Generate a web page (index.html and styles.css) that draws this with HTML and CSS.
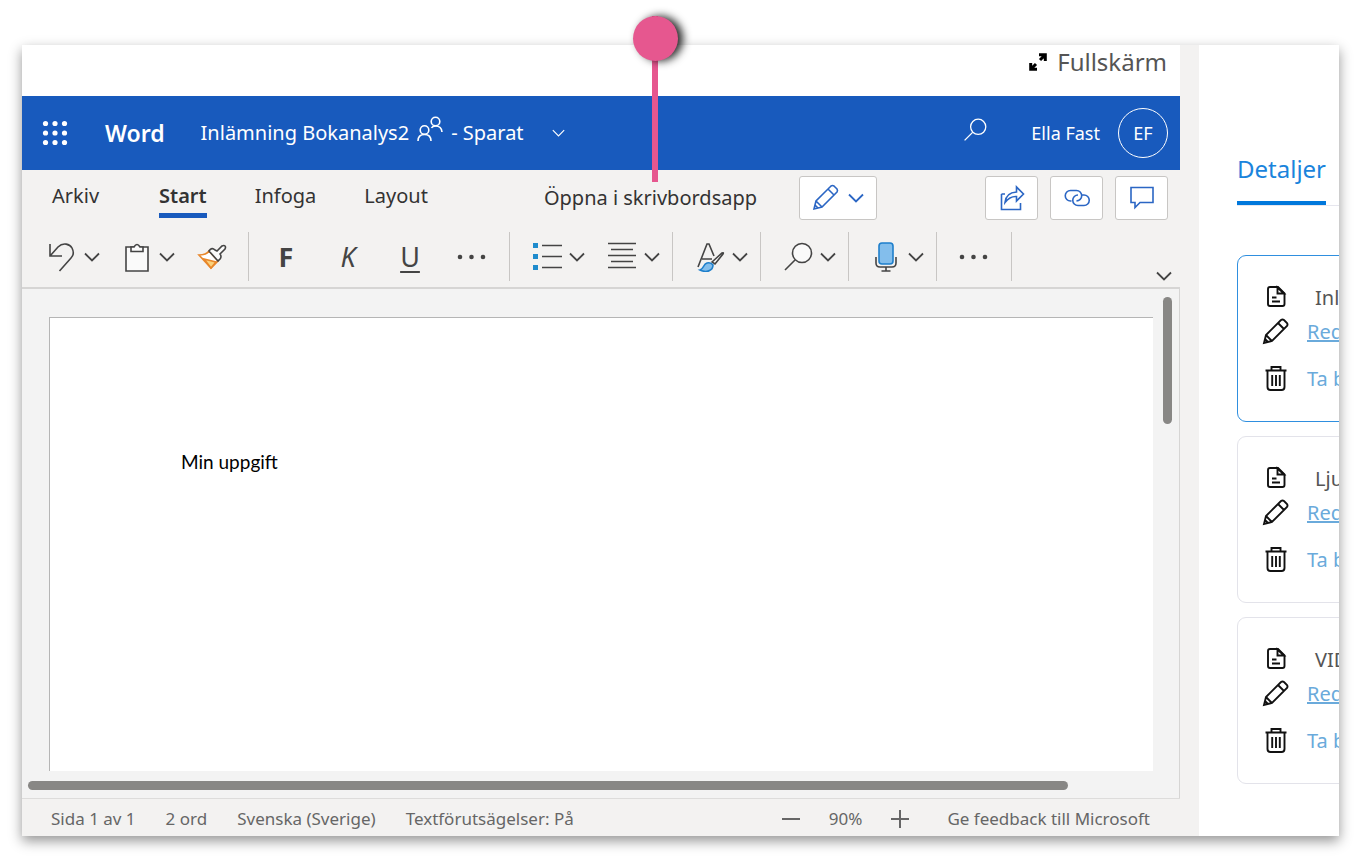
FILE: index.html
```
<!DOCTYPE html>
<html lang="sv">
<head>
  <meta charset="UTF-8">
  <meta name="viewport" content="width=device-width, initial-scale=1.0">
  <title>Inlämning Bokanalys2</title>
  <link rel="stylesheet" href="styles.css">
</head>
<body>

  <!-- Återkommande ikoner -->
  <svg class="symbols" aria-hidden="true">
    <symbol id="chevron" viewBox="0 0 16 10"><path d="M1 1.500l7 7 7-7"/></symbol>
    <symbol id="dots" viewBox="0 0 30 6"><circle cx="3" cy="3" r="2.300"/><circle cx="14.500" cy="3" r="2.300"/><circle cx="26" cy="3" r="2.300"/></symbol>
    <symbol id="pencil" viewBox="0 0 28 28"><path d="M2 25l2-8L19 2q1.500-1 3 0l3 3q1 1.500 0 3L10 23zM16 5l6 6M4 17l6 6M3 21l3 3"/></symbol>
    <symbol id="search" viewBox="0 0 30 30"><circle cx="19" cy="11" r="9.500"/><path d="M12 18L2 28"/></symbol>
    <symbol id="file" viewBox="0 0 28 28"><path d="M8 3h8l6.500 6.500V20q0 2-2 2H8q-2 0-2-2V5q0-2 2-2z"/><path d="M15.500 3.500v6h6.500zM10 13.500h4.500M10 17.500h8"/></symbol>
    <symbol id="trash" viewBox="0 0 28 28"><path d="M3.500 5.500h21M9.500 5V2h9v3M5.500 6v16q0 3 3 3h11q3 0 3-3V6M10.200 10v11M14 10v11M17.800 10v11"/></symbol>
  </svg>

  <div class="frame">
    <main class="editor">
      <div class="topbar">
        <button class="fullscreen">
          <svg class="icon-full" viewBox="0 0 18 18"><path d="M11 7l5-5M10 1.700h6.300V8M7 11l-5 5M1.700 10v6.300H8"/></svg>
          Fullskärm
        </button>
      </div>

      <header class="header">
        <button class="waffle" aria-label="Appar">
          <svg viewBox="0 0 26 26"><g><circle cx="3.500" cy="3.500" r="2.600"/><circle cx="13" cy="3.500" r="2.600"/><circle cx="22.500" cy="3.500" r="2.600"/><circle cx="3.500" cy="13" r="2.600"/><circle cx="13" cy="13" r="2.600"/><circle cx="22.500" cy="13" r="2.600"/><circle cx="3.500" cy="22.500" r="2.600"/><circle cx="13" cy="22.500" r="2.600"/><circle cx="22.500" cy="22.500" r="2.600"/></g></svg>
        </button>
        <span class="brand">Word</span>
        <button class="doc-title">
          <span>Inlämning Bokanalys2</span>
          <svg class="people" viewBox="0 0 26 26"><circle cx="7.500" cy="14" r="4.300"/><path d="M1 25q0-6.500 6.500-6.500T14 25"/><circle cx="18.500" cy="5.500" r="4.300"/><path d="M14.500 12q1-2 4-2 6 0 6.500 6"/></svg>
          <span>- Sparat</span>
          <svg class="chevron title-chevron"><use href="#chevron"/></svg>
        </button>
        <button class="header-search" aria-label="Sök"><svg viewBox="0 0 30 30"><use href="#search"/></svg></button>
        <span class="user">Ella Fast</span>
        <button class="avatar">EF</button>
      </header>

      <nav class="tabs">
        <div class="tab-list">
          <button class="tab">Arkiv</button>
          <button class="tab active">Start</button>
          <button class="tab">Infoga</button>
          <button class="tab">Layout</button>
        </div>
        <div class="open-app">
          <button class="open-button">Öppna i skrivbordsapp</button>
          <span class="pin"></span>
        </div>
        <button class="box-button mode" aria-label="Redigeringsläge">
          <svg class="box-icon"><use href="#pencil"/></svg>
          <svg class="chevron"><use href="#chevron"/></svg>
        </button>
        <div class="actions">
          <button class="box-button" aria-label="Dela"><svg class="box-icon" viewBox="0 0 28 28"><path d="M3.500 10v15.500h19V19M3.500 10H7M7 18.500q1-10 11.500-10.500V3l7 7-7 7v-4.500Q12 12 7 18.500z"/></svg></button>
          <button class="box-button" aria-label="Kopiera länk"><svg class="box-icon" viewBox="0 0 28 28"><path d="M8.500 17H7.500a5 5 0 0 1 0-10.500h6a5.200 5.200 0 0 1 0 10.400M19 11h2a5.200 5.200 0 0 1 0 10.500h-6a5.200 5.200 0 0 1 0-10.500"/></svg></button>
          <button class="box-button" aria-label="Kommentarer"><svg class="box-icon" viewBox="0 0 28 28"><path d="M3 3.500h22v15H12l-5 5v-5H3z"/></svg></button>
        </div>
      </nav>

      <div class="toolbar">
        <div class="group">
          <button class="tool" aria-label="Ångra"><svg class="icon" viewBox="0 0 30 30"><path d="M3 2v12h12M3 14l8-9c5-5 12-3 14 1s1 8-1 10L12.500 29"/></svg><svg class="chevron"><use href="#chevron"/></svg></button>
          <button class="tool" aria-label="Klistra in"><svg class="icon" viewBox="0 0 30 30"><path class="paper" d="M4 5h22v24H4z"/><path class="paper" d="M9 9.500V5h3q3-5 6 0h3v4.500z"/></svg><svg class="chevron"><use href="#chevron"/></svg></button>
          <button class="tool" aria-label="Hämta format"><svg class="icon" viewBox="0 0 30 30"><path class="brush-hair" d="M2 13c5 0 8-1 10-4l9 10-7 7z"/><path class="brush-fill" d="M7 17l12 3-5 6z"/><path class="paper" d="M12 9c2-3 4-3 6-1l2 1 5-5q2-1 3 0t0 3l-5 5q1 1 1 3t-3 4z"/></svg></button>
        </div>
        <div class="group format">
          <button class="letter bold">F</button>
          <button class="letter italic">K</button>
          <button class="letter underline">U</button>
          <button class="letter" aria-label="Fler teckenalternativ"><svg class="dots"><use href="#dots"/></svg></button>
        </div>
        <div class="group">
          <button class="tool" aria-label="Punktlista"><svg class="icon" viewBox="0 0 30 30"><path class="bullets" d="M1 1h5v5H1zM1 12h5v5H1zM1 23h5v5H1z"/><path d="M10 3.500h20M10 14.500h20M10 25.500h20"/></svg><svg class="chevron"><use href="#chevron"/></svg></button>
          <button class="tool" aria-label="Justering"><svg class="icon" viewBox="0 0 30 30"><path d="M1 1.500h28M4 7.500h22M1 13.500h28M4 19.500h22M1 25.500h28"/></svg><svg class="chevron"><use href="#chevron"/></svg></button>
        </div>
        <div class="group">
          <button class="tool" aria-label="Format"><svg class="icon" viewBox="0 0 30 30"><path d="M3 25L12 2h2l5 12M7 17h10"/><path class="paper" d="M17 20L27 11q2-1 1 1l-8 10z"/><path class="paint" d="M5 28c4-1 3-6 7-7q4-1 6 2c0 6-7 8-13 5z"/></svg><svg class="chevron"><use href="#chevron"/></svg></button>
        </div>
        <div class="group">
          <button class="tool" aria-label="Sök"><svg class="icon"><use class="lens" href="#search"/></svg><svg class="chevron"><use href="#chevron"/></svg></button>
        </div>
        <div class="group">
          <button class="tool" aria-label="Diktera"><svg class="icon" viewBox="0 0 30 30"><path d="M5 15v6q0 4 4 4h12q4 0 4-4v-6M15 25v4M10.500 29h9"/><rect class="mic" x="8" y="1" width="14" height="21" rx="3"/></svg><svg class="chevron"><use href="#chevron"/></svg></button>
        </div>
        <div class="group more">
          <button class="tool" aria-label="Fler alternativ"><svg class="dots"><use href="#dots"/></svg></button>
        </div>
        <button class="collapse" aria-label="Dölj menyfliksområdet"><svg class="chevron"><use href="#chevron"/></svg></button>
      </div>

      <div class="canvas">
        <article class="page">
          <p>Min uppgift</p>
        </article>
        <div class="scroll-y"></div>
        <div class="scroll-x"></div>
      </div>

      <footer class="status">
        <span>Sida 1 av 1</span>
        <span>2 ord</span>
        <span>Svenska (Sverige)</span>
        <span>Textförutsägelser: På</span>
        <div class="zoom">
          <button aria-label="Zooma ut"><svg viewBox="0 0 18 18"><path d="M0 9h18"/></svg></button>
          <span>90%</span>
          <button aria-label="Zooma in"><svg viewBox="0 0 18 18"><path d="M0 9h18M9 0v18"/></svg></button>
        </div>
        <a class="feedback" href="#">Ge feedback till Microsoft</a>
      </footer>
    </main>

    <aside class="side">
      <div class="side-tabs">
        <button class="side-tab">Detaljer</button>
      </div>
      <section class="card selected">
        <svg><use href="#file"/></svg><span class="name">Inlämning Bokanalys2</span>
        <svg><use href="#pencil"/></svg><a class="edit" href="#">Redigera</a>
        <svg><use href="#trash"/></svg><a class="delete" href="#">Ta bort</a>
      </section>
      <section class="card">
        <svg><use href="#file"/></svg><span class="name">Ljudfil</span>
        <svg><use href="#pencil"/></svg><a class="edit" href="#">Redigera</a>
        <svg><use href="#trash"/></svg><a class="delete" href="#">Ta bort</a>
      </section>
      <section class="card">
        <svg><use href="#file"/></svg><span class="name">VIDEO</span>
        <svg><use href="#pencil"/></svg><a class="edit" href="#">Redigera</a>
        <svg><use href="#trash"/></svg><a class="delete" href="#">Ta bort</a>
      </section>
    </aside>
  </div>

</body>
</html>
```
FILE: styles.css
```
* {
  box-sizing: border-box;
}

body {
  margin: 0;
  padding: 45px 21px 30px 22px;
  min-height: 100vh;
  display: flex;
  background: #fff;
  color: #333;
  font-family: "Noto Sans", "Open Sans", sans-serif;
  font-size: 20px;
  line-height: 28px;
}

button {
  padding: 0;
  border: none;
  background: none;
  color: inherit;
  font: inherit;
  white-space: nowrap;
  cursor: pointer;
}

svg {
  display: block;
  flex: none;
  fill: none;
  stroke: currentColor;
  stroke-width: 1.6;
}

.symbols {
  position: absolute;
  width: 0;
  height: 0;
}

.frame {
  flex: 1;
  min-width: 0;
  display: flex;
  background: #f3f2f1;
  box-shadow: 0 5px 12px rgba(0, 0, 0, 0.42);
}

.editor {
  flex: 1;
  min-width: 0;
  display: flex;
  flex-direction: column;
}

/* Överkant */
.topbar {
  height: 51px;
  padding: 1px 13px 0 0;
  display: flex;
  justify-content: flex-end;
  align-items: flex-start;
  background: #fff;
}

.fullscreen {
  display: flex;
  align-items: center;
  gap: 10px;
  color: #555;
  font-size: 24px;
  line-height: 32px;
}

.icon-full {
  width: 18px;
  height: 18px;
  color: #000;
  stroke-width: 3;
}

.header {
  height: 74px;
  padding: 0 12px 0 20px;
  display: flex;
  align-items: center;
  background: #185abd;
  color: #fff;
}

.waffle svg {
  width: 26px;
  height: 26px;
  fill: #fff;
  stroke: none;
}

.brand {
  margin: 0 36px 0 37px;
  font-size: 23px;
  font-weight: 600;
}

.doc-title {
  display: flex;
  align-items: center;
  gap: 8px;
}

.people {
  width: 26px;
  height: 26px;
  margin-bottom: 8px;
}

.chevron {
  width: 16px;
  height: 10px;
  stroke-width: 1.8;
}

.title-chevron {
  width: 13px;
  margin-left: 20px;
  stroke-width: 1.4;
}

.header-search {
  margin: 0 44px 6px auto;
}

.header-search svg {
  width: 24px;
  height: 24px;
}

.user {
  margin-right: 18px;
  font-size: 18px;
}

.avatar {
  width: 50px;
  height: 50px;
  border: 1px solid #fff;
  border-radius: 50%;
  font-size: 18px;
}

/* Menyflikar */
.tabs {
  height: 56px;
  padding: 0 12px 0 30px;
  display: flex;
  align-items: center;
}

.tab-list {
  display: flex;
  gap: 48px;
}

.tab {
  height: 40px;
  padding: 4px 0 3px;
  border-bottom: 5px solid transparent;
}

.tab.active {
  margin-left: 12px;
  border-bottom-color: #185abd;
  font-weight: 600;
}

.open-app {
  position: relative;
  display: flex;
  margin: 0 42px 0 116px;
}

.pin {
  position: absolute;
  left: 89px;
  bottom: 30px;
  width: 45px;
  height: 166px;
  background: linear-gradient(#e6578f, #e6578f) center / 6px 100% no-repeat;
}

.pin::before {
  content: "";
  display: block;
  height: 45px;
  border-radius: 50%;
  background: #e6578f;
  box-shadow: 5px 0 8px rgba(0, 0, 0, 0.85);
}

.box-button {
  width: 53px;
  height: 44px;
  display: flex;
  align-items: center;
  justify-content: center;
  border: 1px solid #c8c6c4;
  border-radius: 3px;
  background: #fff;
  color: #2b66c4;
}

.mode {
  width: 78px;
  gap: 8px;
}

.box-icon {
  width: 28px;
  height: 28px;
}

.actions {
  margin-left: auto;
  display: flex;
  gap: 12px;
}

/* Verktygsfält */
.toolbar {
  height: 63px;
  padding: 6px 8px 6px 3px;
  display: flex;
  border-bottom: 2px solid #d6d5d4;
  color: #444;
}

.group {
  padding: 0 12px 0 22px;
  display: flex;
  align-items: center;
  gap: 22px;
  border-right: 1px solid #c8c6c4;
}

.group:first-child {
  padding-right: 21px;
}

.tool {
  display: flex;
  align-items: center;
  gap: 7px;
}

.icon {
  width: 30px;
  height: 30px;
}

.format {
  padding: 0 6px;
  gap: 0;
}

.letter {
  width: 62px;
  display: flex;
  justify-content: center;
  font-size: 27px;
}

.bold {
  font-weight: 700;
}

.italic {
  font-style: italic;
}

.underline {
  text-decoration: underline;
  text-decoration-thickness: 2px;
  text-underline-offset: 4px;
}

.dots {
  width: 30px;
  height: 6px;
  fill: currentColor;
  stroke: none;
}

.letter .dots {
  align-self: center;
}

.more {
  padding: 0 22px;
}

.collapse {
  margin-left: auto;
  align-self: flex-end;
}

.paper {
  fill: #fafafa;
}

.lens {
  fill: #fafafa;
}

.brush-hair {
  fill: #fff;
  stroke: #e8872b;
}

.brush-fill {
  fill: #fbd27c;
  stroke: #e8872b;
}

.bullets {
  fill: #1e8bcd;
  stroke: none;
}

.paint,
.mic {
  fill: #83beec;
  stroke: #1e7fcb;
}

/* Dokument */
.canvas {
  flex: 1;
  padding: 8px 7px 8px 6px;
  display: grid;
  grid-template-columns: 1fr 9px;
  grid-template-rows: 1fr 9px;
  gap: 10px;
  border-right: 1px solid #d6d5d4;
  background: #f3f3f3;
}

.page {
  margin: 20px 0 0 21px;
  padding: 130px 131px;
  border-top: 1px solid #b5b5b5;
  border-left: 1px solid #b5b5b5;
  background: #fff;
  color: #000;
  font-family: Lato, sans-serif;
  font-size: 19px;
}

.page p {
  margin: 0;
}

.scroll-y {
  height: 127px;
  border-radius: 5px;
  background: #888785;
}

.scroll-x {
  width: 92.4%;
  border-radius: 5px;
  background: #888785;
}

.status {
  height: 38px;
  padding: 2px 30px 0 29px;
  display: flex;
  align-items: center;
  gap: 30px;
  border-top: 1px solid #dddcdb;
  color: #666;
  font-size: 17px;
}

.zoom {
  margin-left: auto;
  display: flex;
  align-items: center;
  gap: 29px;
}

.zoom svg {
  width: 18px;
  height: 18px;
  stroke-width: 2;
}

.feedback {
  margin-left: 8px;
  color: inherit;
  text-decoration: none;
}

/* Sidopanel */
.side {
  flex: 0 0 140px;
  margin-left: 19px;
  padding: 107px 0 0 38px;
  overflow: hidden;
  background: #fff;
}

.side-tabs {
  width: 320px;
  margin-bottom: 49px;
  border-bottom: 1px solid #e6e6ee;
}

.side-tab {
  padding: 1px 0 16px;
  border-bottom: 4px solid #0078dc;
  color: #1a84dc;
  font-size: 24px;
  line-height: 32px;
}

.card {
  width: 320px;
  height: 167px;
  margin-bottom: 14px;
  padding: 26px 24px;
  display: grid;
  grid-template-columns: 28px 1fr;
  grid-template-rows: 32px 36px 58px;
  align-items: center;
  column-gap: 17px;
  border: 1px solid #e3e3ea;
  border-radius: 9px;
  white-space: nowrap;
}

.card.selected {
  border-color: #2f8fdf;
}

.card svg {
  width: 28px;
  height: 28px;
  color: #111;
  stroke-width: 1.9;
}

.name {
  padding-left: 8px;
  color: #555;
}

.edit,
.delete {
  color: #6aaadb;
}

.delete {
  text-decoration: none;
}
```
